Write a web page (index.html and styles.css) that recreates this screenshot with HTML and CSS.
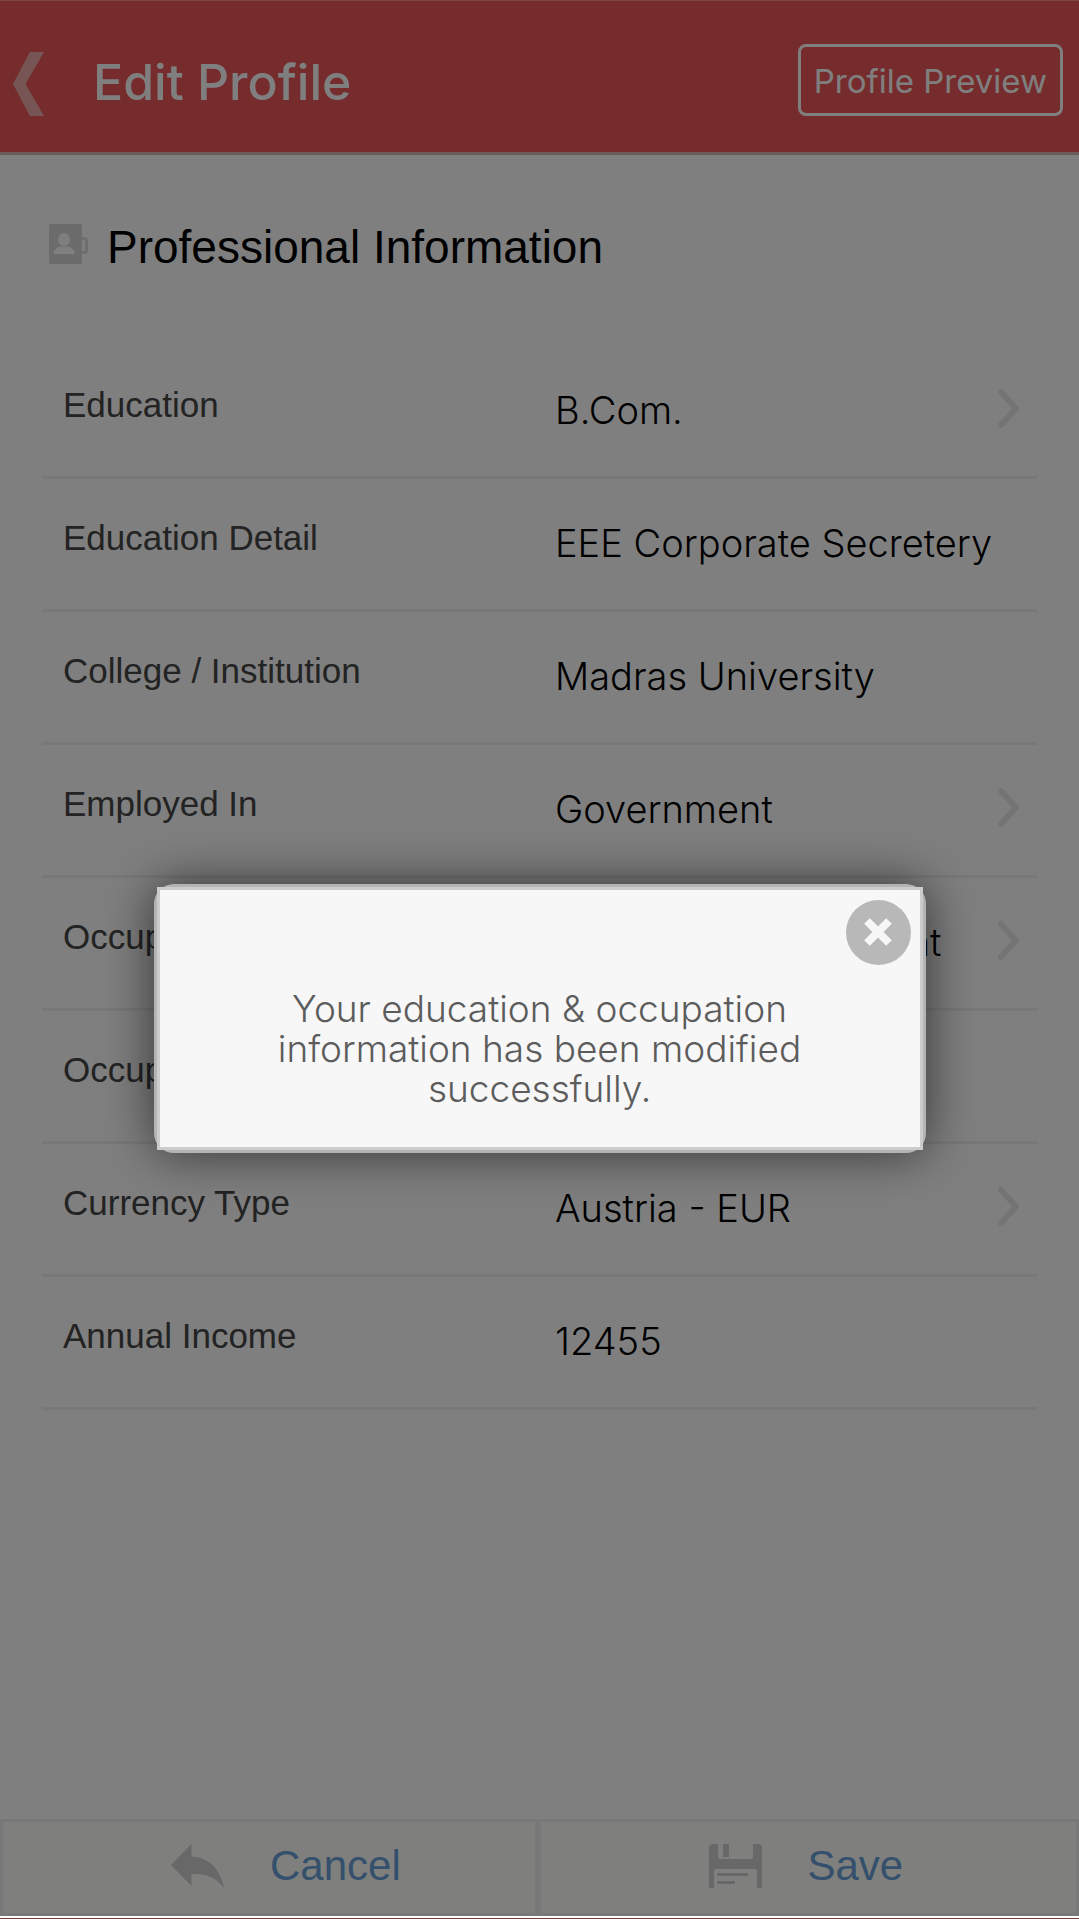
FILE: index.html
```html
<!DOCTYPE html>
<html lang="en">
<head>
<meta charset="utf-8">
<meta name="viewport" content="width=device-width, initial-scale=1">
<title>Edit Profile</title>
<link rel="stylesheet" href="styles.css">
</head>
<body>
<div class="screen">
  <header class="topbar">
    <button class="back" type="button" aria-label="Back">
      <svg width="31" height="64" viewBox="0 0 31 64"><path d="M17 0h14L12.500 32 31 64H17L0 32z"/></svg>
    </button>
    <h1 class="title">Edit Profile</h1>
    <button class="preview" type="button">Profile Preview</button>
  </header>

  <main class="content">
    <h2 class="section-title">
      <svg class="section-icon" width="39" height="40" viewBox="0 0 39 40">
        <path class="book" d="M2 0h29q2 0 2 2v36q0 2-2 2H2q-2 0-2-2V2q0-2 2-2z"/>
        <path class="ring" d="M33 14.500h2.500q2 0 2 2v10q0 2-2 2H33"/>
        <ellipse class="person" cx="15" cy="15.500" rx="6" ry="6.500"/>
        <path class="person" d="M4 30q1-6 7-7.500h8q6 1.500 7 7.500z"/>
      </svg>
      Professional Information
    </h2>

    <form class="fields" id="profile">
      <div class="field">
        <label for="education">Education</label>
        <select id="education"><option>B.Com.</option></select>
        <svg class="chevron" width="21" height="39" viewBox="0 0 21 39"><path d="M3 3l15 16.500L3 36"/></svg>
      </div>
      <div class="field">
        <label for="detail">Education Detail</label>
        <input id="detail" type="text" value="EEE Corporate Secretery">
      </div>
      <div class="field">
        <label for="college">College / Institution</label>
        <input id="college" type="text" value="Madras University">
      </div>
      <div class="field">
        <label for="employed">Employed In</label>
        <select id="employed"><option>Government</option></select>
        <svg class="chevron" width="21" height="39" viewBox="0 0 21 39"><path d="M3 3l15 16.500L3 36"/></svg>
      </div>
      <div class="field">
        <label for="occupation">Occupation</label>
        <select id="occupation"><option>Insurance Accountant</option></select>
        <svg class="chevron" width="21" height="39" viewBox="0 0 21 39"><path d="M3 3l15 16.500L3 36"/></svg>
      </div>
      <div class="field">
        <label for="occdetail">Occupation Detail</label>
        <input id="occdetail" type="text">
      </div>
      <div class="field">
        <label for="currency">Currency Type</label>
        <select id="currency"><option>Austria - EUR</option></select>
        <svg class="chevron" width="21" height="39" viewBox="0 0 21 39"><path d="M3 3l15 16.500L3 36"/></svg>
      </div>
      <div class="field">
        <label for="income">Annual Income</label>
        <input id="income" type="text" value="12455">
      </div>
    </form>
  </main>

  <footer class="actions">
    <button class="action" type="button">
      <svg width="53" height="44" viewBox="0 0 53 44"><path d="M0 21L20.500 0v12.500C36 13 49 23 53 44 45 33 35 29.500 20.500 30v12z"/></svg>
      Cancel
    </button>
    <button class="action" type="submit" form="profile">
      <svg width="53" height="44" viewBox="0 0 53 44"><path d="M4 0h5v12q0 3 3 3h29q3 0 3-3V0h5q4 0 4 4v40h-5V27q0-2-2-2H7q-2 0-2 2v17H0V4q0-4 4-4zM14 0h6v13h-6zM8 29h31v3H8zM8 37h18v3H8z"/></svg>
      Save
    </button>
  </footer>

  <div class="backdrop">
    <div class="dialog" role="alertdialog" aria-labelledby="message">
      <div class="dialog-body">
        <button class="close" type="button" aria-label="Close">
          <svg width="28" height="28" viewBox="0 0 28 28"><path d="M3 3l22 22M25 3L3 25"/></svg>
        </button>
        <p class="message" id="message">Your education &amp; occupation information has been modified successfully.</p>
      </div>
    </div>
  </div>
</div>
</body>
</html>
```
FILE: styles.css
```css
* {
  box-sizing: border-box;
}

body {
  margin: 0;
  background: #fff;
  border-bottom: 1px solid #803a40;
  padding-bottom: 2px;
  font-family: "Liberation Sans", Arial, sans-serif;
}

button,
input,
select {
  margin: 0;
  padding: 0;
  border: 0;
  background: none;
  font: inherit;
  color: inherit;
}

.screen {
  position: relative;
  display: flex;
  flex-direction: column;
  min-height: calc(100vh - 3px);
}

.topbar {
  display: flex;
  align-items: center;
  gap: 49px;
  height: 155px;
  padding: 14px 16px 0 13px;
  background: #ed5859;
  border-top: 1px solid #f88;
  border-bottom: 3px solid #d2b4b8;
  color: #fff;
  font-family: Inter, sans-serif;
}

.back {
  display: flex;
}

.back svg {
  fill: #eeaaaa;
}

.title {
  flex: 1;
  margin: 0;
  padding-bottom: 4px;
  font-size: 50px;
  font-weight: 500;
}

.preview {
  height: 72px;
  margin-bottom: 8px;
  padding: 2px 13px 0;
  border: 3px solid #fff;
  border-radius: 8px;
  font-size: 33px;
}

.content {
  flex: 1;
  padding: 66px 42px 0;
}

.section-title {
  display: flex;
  align-items: center;
  gap: 19px;
  margin: 0 0 73px;
  padding-left: 7px;
  line-height: 52px;
  font-size: 46px;
  font-weight: 400;
}

.section-icon {
  margin-bottom: 6px;
}

.book {
  fill: #d8d8d8;
}

.ring {
  fill: none;
  stroke: #dedede;
  stroke-width: 3;
}

.person {
  fill: #fff;
}

.field {
  display: grid;
  grid-template-columns: 492px 1fr auto;
  align-items: center;
  height: 133px;
  padding: 0 18px 2px 21px;
  border-bottom: 3px solid #f0f0f0;
  font-size: 35px;
}

.field label {
  padding-bottom: 10px;
  color: #464646;
}

.field input,
.field select {
  min-width: 0;
  appearance: none;
  font-family: Inter, sans-serif;
  font-size: 38px;
  font-weight: 300;
}

.chevron {
  margin-bottom: 4px;
  fill: none;
  stroke: #e9e9e9;
  stroke-width: 6;
  stroke-linecap: round;
  stroke-linejoin: round;
}

.actions {
  display: grid;
  grid-template-columns: calc(50% - 2px) 1fr;
}

.action {
  display: flex;
  align-items: center;
  gap: 46px;
  height: 97px;
  padding: 0 0 4px 168px;
  border: 3px solid #f0f0f0;
  background: #fffffb;
  color: #68a0d8;
  font-size: 42px;
}

.action svg {
  fill: #d0d0d0;
}

.backdrop {
  position: absolute;
  inset: 0;
  display: flex;
  align-items: center;
  justify-content: center;
  padding: 120px 22px 0;
  background: rgba(0, 0, 0, 0.5);
}

.dialog {
  width: 772px;
  padding: 3px;
  border-radius: 20px;
  background: #b4b4b4;
  box-shadow: 0 0 50px rgba(0, 0, 0, 0.6);
}

.dialog-body {
  padding: 10px 9px 38px;
  border: 3px solid #ccc;
  background: #f7f7f7;
}

.close {
  display: flex;
  align-items: center;
  justify-content: center;
  width: 65px;
  height: 65px;
  margin-left: auto;
  border-radius: 50%;
  background: #b8b8b8;
}

.close svg {
  stroke: #f7f7f7;
  stroke-width: 8;
}

.message {
  max-width: 560px;
  margin: 24px auto 0;
  color: #5c5c5c;
  font-family: Inter, sans-serif;
  font-size: 37px;
  font-weight: 300;
  line-height: 40px;
  text-align: center;
}
```
